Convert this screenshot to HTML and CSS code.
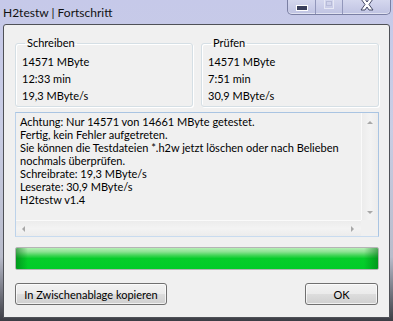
FILE: index.html
```html
<!DOCTYPE html>
<html lang="de">
<head>
    <meta charset="UTF-8">
    <title>H2testw | Fortschritt</title>
    <link rel="stylesheet" href="styles.css">
</head>
<body>
    <div class="window">
        <div class="titlebar">
            <span class="title">H2testw | Fortschritt</span>
            <div class="caption-buttons">
                <span class="cap cap-min">
                    <svg width="12" height="6" viewBox="0 0 12 6"><rect x="0.5" y="0.5" width="11" height="5" fill="#3a3f5c" stroke="#ffffff" stroke-width="1"/></svg>
                </span>
                <span class="cap cap-max">
                    <svg width="10" height="9" viewBox="0 0 10 9"><rect x="0.5" y="-1" width="9" height="9.5" fill="none" stroke="#e6e8f4" stroke-width="1"/><rect x="2.5" y="1.5" width="5" height="4" fill="none" stroke="#b7bbd8" stroke-width="1"/></svg>
                </span>
                <span class="cap cap-close">
                    <svg width="14" height="11" viewBox="0 0 14 11"><path d="M1 -1 L5 -1 L7 2 L9 -1 L13 -1 L9 4.5 L13 10 L9 10 L7 7 L5 10 L1 10 L5 4.5 Z" fill="#ffffff" stroke="#454a66" stroke-width="1"/></svg>
                </span>
            </div>
        </div>

        <div class="client">
            <div class="groups">
                <fieldset class="group">
                    <legend>Schreiben</legend>
                    <div class="value">14571 MByte</div>
                    <div class="value">12:33 min</div>
                    <div class="value">19,3 MByte/s</div>
                </fieldset>
                <fieldset class="group">
                    <legend>Prüfen</legend>
                    <div class="value">14571 MByte</div>
                    <div class="value">7:51 min</div>
                    <div class="value">30,9 MByte/s</div>
                </fieldset>
            </div>

            <div class="log">
                <div class="log-main">
                    <div class="log-text">
                        <div>Achtung: Nur 14571 von 14661 MByte getestet.</div>
                        <div>Fertig, kein Fehler aufgetreten.</div>
                        <div>Sie können die Testdateien *.h2w jetzt löschen oder nach Belieben</div>
                        <div>nochmals überprüfen.</div>
                        <div>Schreibrate: 19,3 MByte/s</div>
                        <div>Leserate: 30,9 MByte/s</div>
                        <div>H2testw v1.4</div>
                    </div>
                    <div class="vscroll">
                        <span class="arrow arrow-up"></span>
                        <span class="arrow arrow-down"></span>
                    </div>
                </div>
                <div class="hscroll">
                    <div class="hscroll-track">
                        <span class="arrow arrow-left"></span>
                        <span class="arrow arrow-right"></span>
                    </div>
                    <div class="scroll-corner"></div>
                </div>
            </div>

            <div class="progress">
                <div class="progress-bar" style="width: 100%"></div>
            </div>

            <div class="buttons">
                <button class="btn btn-copy">In Zwischenablage kopieren</button>
                <button class="btn btn-ok">OK</button>
            </div>
        </div>
    </div>
</body>
</html>
```

FILE: styles.css
```css
html, body {
    margin: 0;
    padding: 0;
}

body {
    width: 393px;
    height: 321px;
    overflow: hidden;
    font-family: Lato, "Liberation Sans", sans-serif;
    font-size: 11px;
    color: #000;
}

/******/
/* WINDOW FRAME */
/*******/

.window {
    height: 321px;
    display: flex;
    flex-direction: column;
    background: linear-gradient(to bottom, #c6c9e9 0%, #c9cde4 40%, #b9bccb 80%, #3c3d44 100%);
}

.titlebar {
    height: 24px;
    display: flex;
    justify-content: space-between;
    align-items: flex-start;
}

.title {
    margin: 5px 0 0 3px;
    font-size: 12px;
    line-height: 15px;
    color: #111;
}

.caption-buttons {
    display: flex;
    margin-right: 2px;
    height: 14px;
    border: 1px solid #7a7fa3;
    border-top: none;
    border-radius: 0 0 5px 5px;
    background: linear-gradient(to bottom, #d4d7ee, #bfc3e2);
    box-shadow: inset 0 -1px 0 rgba(255,255,255,0.5);
    overflow: hidden;
}

.cap {
    display: flex;
    justify-content: center;
    align-items: flex-start;
}

.cap-min {
    width: 27px;
    padding-top: 5px;
    border-right: 1px solid #9297bb;
}

.cap-max {
    width: 26px;
    border-right: 1px solid #9297bb;
}

.cap-close {
    width: 47px;
}

.client {
    flex: 1;
    margin: 0 3px 3px 3px;
    padding: 11px 10px 12px 11px;
    border: 1px solid #4f5157;
    border-radius: 3px 3px 0 0;
    background-color: #f0f0f0;
    display: flex;
    flex-direction: column;
}

/******/
/* GROUP BOXES */
/*******/

.groups {
    display: flex;
    gap: 8px;
}

.group {
    flex: 1;
    margin: 0;
    padding: 3px 6px 2px 6px;
    border: 1px solid #d5dfe5;
    border-radius: 3px;
    box-shadow: inset 1px 1px 0 #fff, 1px 1px 0 #fff;
    min-width: 0;
}

.group legend {
    padding: 0 2px;
    margin-left: 3px;
    line-height: 14px;
}

.value {
    line-height: 17px;
    white-space: nowrap;
}

/******/
/* LOG BOX */
/*******/

.log {
    margin-top: 5px;
    border: 1px solid #a9c4e2;
    border-bottom-color: #c8dbef;
    border-left-color: #bcd2ea;
    display: flex;
    flex-direction: column;
}

.log-main {
    height: 107px;
    display: flex;
}

.log-text {
    flex: 1;
    padding: 2px 0 0 4px;
    line-height: 13px;
    white-space: nowrap;
    overflow: hidden;
}

.vscroll {
    width: 16px;
    border-left: 1px solid #fafafa;
    background: linear-gradient(to right, #ececec, #f3f3f3 50%, #ececec);
    display: flex;
    flex-direction: column;
    justify-content: space-between;
    align-items: center;
    padding: 8px 0 6px 0;
}

.hscroll {
    height: 16px;
    display: flex;
}

.hscroll-track {
    flex: 1;
    border-top: 1px solid #fafafa;
    background: linear-gradient(to bottom, #ececec, #f3f3f3 50%, #ececec);
    display: flex;
    justify-content: space-between;
    align-items: center;
    padding: 0 7px 0 6px;
}

.scroll-corner {
    width: 17px;
    background-color: #f0f0f0;
}

.arrow {
    width: 0;
    height: 0;
    border: 3px solid transparent;
}

.arrow-up {
    border-top: none;
    border-bottom: 3px solid #a8a8a8;
}

.arrow-down {
    border-bottom: none;
    border-top: 3px solid #a8a8a8;
}

.arrow-left {
    border-left: none;
    border-right: 3px solid #a8a8a8;
}

.arrow-right {
    border-right: none;
    border-left: 3px solid #a8a8a8;
}

/******/
/* PROGRESS */
/*******/

.progress {
    margin-top: 10px;
    height: 21px;
    border: 1px solid #b4b4b4;
    border-radius: 2px;
    background-color: #e6e6e6;
    overflow: hidden;
}

.progress-bar {
    height: 100%;
    background-image:
        linear-gradient(to right, rgba(0,110,20,0.55), rgba(0,110,20,0) 12px, rgba(0,110,20,0) calc(100% - 14px), rgba(0,110,20,0.55)),
        linear-gradient(to bottom, #b6efb6 0%, #8de293 18%, #3fd454 36%, #06cd2a 50%, #00cc28 100%);
}

/******/
/* BUTTONS */
/*******/

.buttons {
    margin-top: 13px;
    display: flex;
    justify-content: space-between;
}

.btn {
    height: 22px;
    padding: 0;
    font-family: inherit;
    font-size: 11px;
    color: #000;
    border: 1px solid #707070;
    border-radius: 3px;
    background: linear-gradient(to bottom, #f2f2f2 0%, #ebebeb 48%, #dddddd 52%, #cfcfcf 100%);
    box-shadow: inset 0 0 0 1px rgba(255,255,255,0.7);
}

.btn-copy {
    width: 152px;
}

.btn-ok {
    width: 73px;
    margin-right: 1px;
}
```
